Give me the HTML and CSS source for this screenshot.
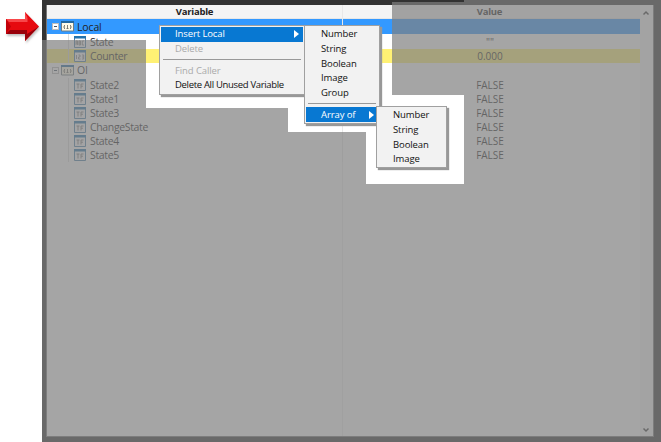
FILE: index.html
```html
<!DOCTYPE html>
<html lang="en">
<head>
<meta charset="utf-8">
<title>Variables</title>
<link rel="stylesheet" href="styles.css">
</head>
<body>
<svg class="defs" width="0" height="0" aria-hidden="true">
  <defs>
    <symbol id="group" viewBox="0 0 13 11"><path fill="#fffbe8" stroke="#6f7d83" d="M.5.5h12v9.500H.5z"/><path fill="#2268a0" d="M0 0h13v2H0z"/><path fill="none" stroke="#62625c" stroke-width=".8" d="M3.500 4v1.500l-1 .5 1 .5V8M9.500 4v1.500l1 .5-1 .5V8M5.500 7.500h2M6.500 4v3.500"/></symbol>
    <symbol id="frame" viewBox="0 0 12 12"><path fill="#f6f8fa" stroke="#4b7fa8" d="M.5.5h11v11H.5z"/><path fill="#2373ad" d="M0 0h12v2.500H0z"/></symbol>
    <symbol id="abc" viewBox="0 0 12 12"><use href="#frame"/><path fill="none" stroke="#777" stroke-width=".8" d="M2 9V5h1.500v4M2 7h1.500M5 5v4h1.500V5H5M5 7h1.500M10 5H8.300v4H10"/></symbol>
    <symbol id="num" viewBox="0 0 12 12"><use href="#frame"/><path fill="none" stroke="#777" stroke-width=".8" d="M2.500 5v4M4.500 5H6v2H4.500v2h2M8 5h1.700v4H8M8 7h1.500"/></symbol>
    <symbol id="bool" viewBox="0 0 12 12"><use href="#frame"/><path fill="none" stroke="#777" stroke-width=".9" d="M2.500 5h3M4 5v4.500M7 9.500V5h2.500M7 7.200h2"/></symbol>
  </defs>
</svg>
<svg class="pointer" viewBox="0 0 42 42"><path fill="#e60a10" d="M6 19h19v-7l14 14.500L25 41v-7H6z"/><path fill="#f8474a" d="M6 19h19v-7l2.500 6v4H9z"/><path fill="#c20009" d="M6 19l5 7.500L6 34z"/><path fill="#98000a" d="M6 34l4-4h17v4l12-7.500L25 41v-7z"/></svg>
<main class="window">
  <section class="table">
    <div class="grid">
      <div class="row head"><span class="name">Variable</span><span class="value">Value</span></div>
      <div class="row selected"><span class="name"><i class="toggle"></i><svg class="group"><use href="#group"/></svg>Local</span><span class="value"></span></div>
      <div class="row leaf"><span class="name"><svg><use href="#abc"/></svg>State</span><span class="value">""</span></div>
      <div class="row leaf marked"><span class="name"><svg><use href="#num"/></svg>Counter</span><span class="value">0.000</span></div>
      <div class="row"><span class="name"><i class="toggle"></i><svg class="group"><use href="#group"/></svg>OI</span><span class="value"></span></div>
      <div class="row leaf"><span class="name"><svg><use href="#bool"/></svg>State2</span><span class="value">FALSE</span></div>
      <div class="row leaf"><span class="name"><svg><use href="#bool"/></svg>State1</span><span class="value">FALSE</span></div>
      <div class="row leaf"><span class="name"><svg><use href="#bool"/></svg>State3</span><span class="value">FALSE</span></div>
      <div class="row leaf"><span class="name"><svg><use href="#bool"/></svg>ChangeState</span><span class="value">FALSE</span></div>
      <div class="row leaf"><span class="name"><svg><use href="#bool"/></svg>State4</span><span class="value">FALSE</span></div>
      <div class="row leaf"><span class="name"><svg><use href="#bool"/></svg>State5</span><span class="value">FALSE</span></div>
      <div class="rest"></div>
    </div>
    <div class="scroll"><svg viewBox="0 0 8 6"><path d="M1.500 4.500 4 2l2.500 2.500"/></svg><svg viewBox="0 0 8 6"><path d="M1.500 1.500 4 4l2.500-2.500"/></svg></div>
  </section>
</main>
<div class="shade"></div>
<div class="menu main-menu">
  <div class="item active"><span>Insert Local</span><i class="arrow"></i></div>
  <div class="item off"><span>Delete</span></div>
  <hr>
  <div class="item off"><span>Find Caller</span></div>
  <div class="item"><span class="long">Delete All Unused Variable</span></div>
</div>
<div class="menu sub-menu">
  <div class="item"><span>Number</span></div>
  <div class="item"><span>String</span></div>
  <div class="item"><span>Boolean</span></div>
  <div class="item"><span>Image</span></div>
  <div class="item"><span>Group</span></div>
  <hr>
  <div class="item active"><span>Array of</span><i class="arrow"></i></div>
</div>
<div class="menu array-menu">
  <div class="item"><span>Number</span></div>
  <div class="item"><span>String</span></div>
  <div class="item"><span>Boolean</span></div>
  <div class="item"><span>Image</span></div>
</div>
</body>
</html>
```
FILE: styles.css
```css
* { box-sizing: border-box; }
body { margin: 0; width: 661px; height: 442px; overflow: hidden; position: relative; display: flex; background: #fff; font: 10px/14px "Open Sans", "Noto Sans", sans-serif; color: #222; }
.defs { position: absolute; }
.pointer { width: 42px; height: 42px; flex: none; filter: drop-shadow(1px 2px 1px #8888); }
.window { flex: 1; height: 442px; padding: 5px 7px 5px 4px; background: #333; }
.table { height: 432px; display: flex; border: 1px solid #777; border-top: 0; background: #fff; }
.grid { width: 593px; display: flex; flex-direction: column; }
.row { height: 14.100px; flex: none; display: grid; grid-template-columns: 296px 297px; align-items: center; }
.name { height: 100%; display: flex; align-items: center; padding-left: 5px; border-right: 1px solid #e8e8e8; white-space: pre; font-size: 10.500px; letter-spacing: -.15px; }
.value { text-align: center; padding-right: 3px; }
.head { height: 14px; background: #f4f4f4; font-weight: 700; border-bottom: 1px solid #e7e7e7; }
.head .name { justify-content: center; padding: 0; font-size: 9.500px; letter-spacing: -.25px; }
.head .value { font-size: 9.500px; letter-spacing: -.25px; padding-right: 4px; }
.selected { height: 15px; background: #3399ff; }
.row.leaf:nth-child(3) { height: 15px; }
.row.marked { background: #fff174; height: 13.500px; }
.row:nth-child(5) { height: 15px; }
.leaf .name { letter-spacing: -.35px; }
.name svg { width: 12px; height: 12px; margin-right: 4px; flex: none; }
.name .group { width: 13px; height: 11px; margin-right: 3px; }
.leaf .name { padding-left: 27px; background: linear-gradient(#ddd, #ddd) 21px 0 / 1px 100% no-repeat; }
.toggle { position: relative; width: 7px; height: 7px; margin-right: 2px; border: 1px solid #bbb; background: #fff; }
.toggle::after { content: ""; position: absolute; left: 1px; top: 2px; width: 3px; height: 1px; background: #456; }
.rest { flex: 1; width: 296px; border-right: 1px solid #eee; }
.scroll { flex: 1; display: flex; flex-direction: column; justify-content: space-between; align-items: center; padding: 5px 1px 3px 0; background: #f9f9f9; }
.scroll svg { width: 8px; height: 6px; fill: none; stroke: #333; stroke-width: 1.500; }
.shade { position: absolute; inset: 0; background: rgba(128, 128, 128, .71); clip-path: polygon(464px 0, 661px 0, 661px 442px, 42px 442px, 42px 40px, 146px 40px, 146px 108px, 288px 108px, 288px 132px, 366px 132px, 366px 184px, 464px 184px, 464px 95px, 392px 95px, 392px 2px, 464px 2px); }
.menu { position: absolute; padding: 1px; border: 1px solid #a0a0a0; background: #f2f2f2; box-shadow: 2px 2px 1px #989898; }
.item { height: 14.700px; display: flex; align-items: center; justify-content: space-between; padding: 0 4px 0 14px; font-size: 9.500px; letter-spacing: -.1px; white-space: nowrap; color: #111; }
.item.active { background: #0878d2; color: #fff; }
.item.off { color: #aaa; }
.long { letter-spacing: -.32px; }
.arrow { border: 4px solid transparent; border-left: 5px solid #fff; border-right: 0; }
.menu hr { height: 1px; margin: 3px 2px; border: 0; background: #999; }
.main-menu { left: 159px; top: 25px; width: 146px; height: 70px; }
.sub-menu { left: 304px; top: 25px; width: 76px; height: 99px; }
.sub-menu .item, .array-menu .item { padding-left: 15px; }
.array-menu { left: 376px; top: 106px; width: 71px; height: 62px; }
```
